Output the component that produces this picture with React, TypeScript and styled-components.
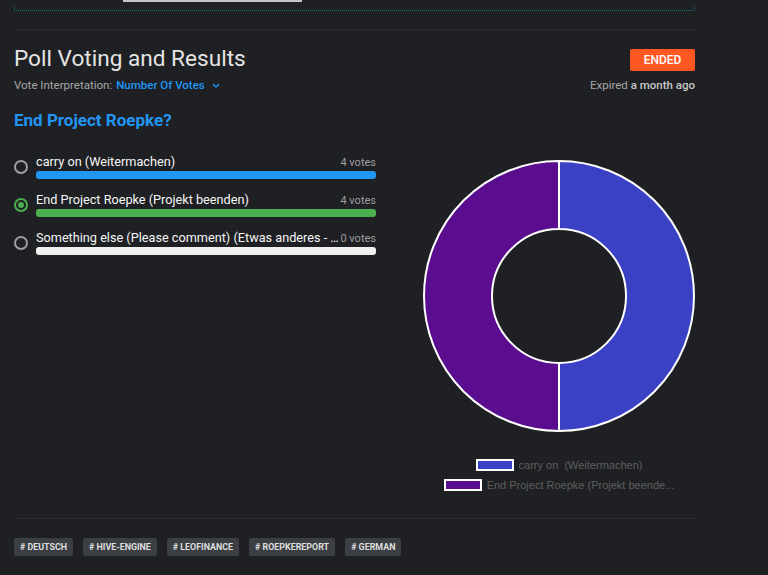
import React from 'react';
import styled, { createGlobalStyle } from 'styled-components';

const GlobalStyle = createGlobalStyle`
    html, body {
        margin: 0;
        padding: 0;
        background: #1e2023;
        font-family: Roboto, "Liberation Sans", sans-serif;
        color: #e4e4e4;
    }
`

const options = [
    { id: 1, title: 'carry on (Weitermachen)', votes: 4, color: '#2196f3', fill: 100, selected: false },
    { id: 2, title: 'End Project Roepke (Projekt beenden)', votes: 4, color: '#4caf50', fill: 100, selected: true },
    { id: 3, title: 'Something else (Please comment) (Etwas anderes - Bitte kommentieren)', votes: 0, color: '#f0f0f0', fill: 0, selected: false },
]

const legend = [
    { label: 'carry on  (Weitermachen)', color: '#3b41c5' },
    { label: 'End Project Roepke (Projekt beende...', color: '#5a0d8e' },
]

const tags = ['deutsch', 'hive-engine', 'leofinance', 'roepkereport', 'german']

const Page = styled.div`
    width: 681px;
    padding-left: 14px;
`

const TopStub = styled.div`
    margin-left: 109px;
    width: 179px;
    height: 2px;
    background: #c4c4c4;
`

const Frame = styled.div`
    margin-top: 4px;
    height: 4px;
    border: 1px dotted #16727c;
    border-top: none;
`

const Divider = styled.div<{ $top: number }>`
    margin-top: ${p => p.$top}px;
    height: 1px;
    background: #2b2e32;
`

const Header = styled.div`
    display: flex;
    justify-content: space-between;
    margin-top: 15px;
`

const Title = styled.h2`
    margin: 0;
    font-size: 22.6px;
    line-height: 28px;
    font-weight: 400;
    color: #e4e4e4;
`

const Meta = styled.div`
    margin-top: 4px;
    font-size: 11.5px;
    line-height: 16px;
    color: #a6a6a6;
    display: flex;
    align-items: center;
`

const Interp = styled.span`
    margin-left: 4px;
    color: #2196f3;
    font-weight: 500;
    display: inline-flex;
    align-items: center;
    gap: 7px;
`

const Side = styled.div`
    display: flex;
    flex-direction: column;
    align-items: flex-end;
`

const Badge = styled.div`
    margin-top: 4px;
    width: 65px;
    height: 22px;
    line-height: 22px;
    text-align: center;
    background: #ff5722;
    color: #fff;
    font-size: 12px;
    font-weight: 500;
    border-radius: 2px;
`

const Expired = styled.div`
    margin-top: 6px;
    font-size: 11.5px;
    line-height: 16px;
    color: #a6a6a6;
    b {
        font-weight: 500;
        color: #c8c8c8;
    }
`

const Question = styled.h3`
    margin: 17px 0 0;
    font-size: 17px;
    line-height: 20px;
    font-weight: 700;
    color: #2196f3;
`

const Body = styled.div`
    display: flex;
    justify-content: space-between;
    align-items: flex-start;
`

const Options = styled.div`
    width: 362px;
    margin-top: 24px;
    display: flex;
    flex-direction: column;
    gap: 13px;
`

const OptionRow = styled.div`
    display: flex;
    align-items: center;
    gap: 8px;
`

const Radio = styled.span<{ $on: boolean }>`
    flex: none;
    box-sizing: border-box;
    width: 14px;
    height: 14px;
    border-radius: 50%;
    border: 2px solid ${p => (p.$on ? '#4caf50' : '#9e9e9e')};
    display: flex;
    align-items: center;
    justify-content: center;
    &::after {
        content: '';
        display: ${p => (p.$on ? 'block' : 'none')};
        width: 6px;
        height: 6px;
        border-radius: 50%;
        background: #4caf50;
    }
`

const OptionBody = styled.div`
    flex: 1;
    min-width: 0;
`

const OptionHead = styled.div`
    display: flex;
    align-items: baseline;
    height: 16px;
`

const Label = styled.span`
    flex: 1;
    min-width: 0;
    font-size: 12.7px;
    line-height: 16px;
    color: #f6f6f6;
    white-space: nowrap;
    overflow: hidden;
    text-overflow: ellipsis;
`

const Votes = styled.span`
    flex: none;
    font-size: 11px;
    color: #9e9e9e;
`

const Track = styled.div`
    margin-top: 1px;
    height: 8px;
    border-radius: 3px;
    background: #f0f0f0;
    overflow: hidden;
`

const Fill = styled.div<{ $color: string }>`
    height: 100%;
    background: ${p => p.$color};
`

const Chart = styled.div`
    width: 272px;
    margin-top: 30px;
    display: flex;
    flex-direction: column;
    align-items: center;
`

const Legend = styled.div`
    margin-top: 23px;
    display: flex;
    flex-direction: column;
    align-items: center;
`

const LegendItem = styled.div`
    height: 20px;
    display: flex;
    align-items: center;
    gap: 5px;
    font-family: "Liberation Sans", Arial, sans-serif;
    font-size: 11px;
    color: #5f5f5f;
    white-space: pre;
`

const Swatch = styled.span<{ $color: string }>`
    box-sizing: border-box;
    width: 38px;
    height: 12px;
    background: ${p => p.$color};
    border: 2px solid #fff;
`

const Tags = styled.div`
    margin-top: 19px;
    display: flex;
    gap: 10px;
`

const Tag = styled.span`
    height: 18px;
    line-height: 18px;
    padding: 0 6px;
    background: #3b3e43;
    border-radius: 2px;
    color: #dedede;
    font-size: 8.9px;
    font-weight: 700;
    text-transform: uppercase;
`

const Donut: React.FC = () => (
    <svg width={272} height={272} viewBox="0 0 272 272">
        <path
            d="M136,1 A135,135 0 0 1 136,271 L136,203 A67,67 0 0 0 136,69 Z"
            fill="#3b41c5"
            stroke="#fff"
            strokeWidth={2}
        />
        <path
            d="M136,271 A135,135 0 0 1 136,1 L136,69 A67,67 0 0 0 136,203 Z"
            fill="#5a0d8e"
            stroke="#fff"
            strokeWidth={2}
        />
    </svg>
)

const App: React.FC = () => (
    <Page>
        <GlobalStyle />
        <TopStub />
        <Frame />
        <Divider $top={18} />

        <Header>
            <div>
                <Title>Poll Voting and Results</Title>
                <Meta>
                    Vote Interpretation:
                    <Interp>
                        Number Of Votes
                        <svg width="8" height="5" viewBox="0 0 8 5">
                            <polyline points="1,1 4,4 7,1" fill="none" stroke="#2196f3" strokeWidth="1.3" />
                        </svg>
                    </Interp>
                </Meta>
            </div>
            <Side>
                <Badge>ENDED</Badge>
                <Expired>
                    Expired <b>a month ago</b>
                </Expired>
            </Side>
        </Header>

        <Question>End Project Roepke?</Question>

        <Body>
            <Options>
                {
                    options.map((option) => (
                        <OptionRow key={option.id}>
                            <Radio $on={option.selected} />
                            <OptionBody>
                                <OptionHead>
                                    <Label>{option.title}</Label>
                                    <Votes>{option.votes} votes</Votes>
                                </OptionHead>
                                <Track>
                                    <Fill $color={option.color} style={{ width: `${option.fill}%` }} />
                                </Track>
                            </OptionBody>
                        </OptionRow>
                    ))
                }
            </Options>

            <Chart>
                <Donut />
                <Legend>
                    {
                        legend.map((item) => (
                            <LegendItem key={item.label}>
                                <Swatch $color={item.color} />
                                {item.label}
                            </LegendItem>
                        ))
                    }
                </Legend>
            </Chart>
        </Body>

        <Divider $top={23} />

        <Tags>
            {
                tags.map((tag) => (
                    <Tag key={tag}># {tag}</Tag>
                ))
            }
        </Tags>
    </Page>
)

export default App;
